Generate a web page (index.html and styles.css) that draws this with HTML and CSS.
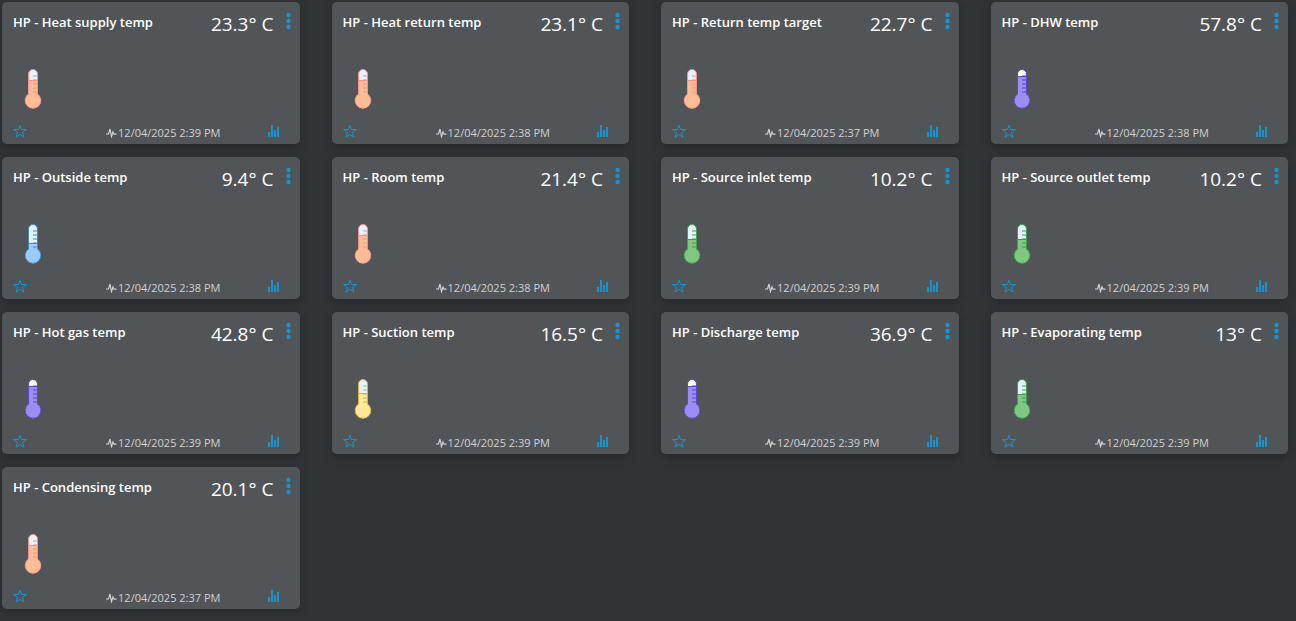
FILE: index.html
```
<!DOCTYPE html>
<html lang="en">
<head>
    <meta charset="UTF-8">
    <meta name="viewport" content="width=device-width, initial-scale=1.0">
    <title>Heat pump temperatures</title>
    <link rel="stylesheet" href="styles.css">
</head>
<body>
    <svg class="sprite" aria-hidden="true">
        <clipPath id="glass">
            <path d="M5.5 6a4.5 4.5 0 0 1 9 0v20.1a7.8 7.8 0 1 1-9 0z"/>
        </clipPath>
        <symbol id="thermo" viewBox="0 0 20 42">
            <g clip-path="url(#glass)">
                <rect class="glass" width="20" height="42"/>
                <rect class="fluid" width="20" height="42"/>
                <rect class="level" width="20" height="1"/>
            </g>
            <path class="outline" d="M5.5 6a4.5 4.5 0 0 1 9 0v20.1a7.8 7.8 0 1 1-9 0z"/>
            <path class="outline" d="M10 8h4.500M10 12h4.500M10 16h4.500M10 20h4.500M10 24h4.500"/>
        </symbol>
        <symbol id="star" viewBox="0 0 14 14">
            <path d="M7 1.200l1.500 4.300h5l-4 3 1.500 4.700L7 10.400l-4 2.800 1.500-4.700-4-3h5z" fill="none" stroke="currentColor"/>
        </symbol>
        <symbol id="dots" viewBox="0 0 5 18">
            <circle cx="2.500" cy="3" r="2.200"/>
            <circle cx="2.500" cy="9" r="2.200"/>
            <circle cx="2.500" cy="15" r="2.200"/>
        </symbol>
        <symbol id="chart" viewBox="0 0 12 12">
            <path d="M0 7h2v5H0zM3 0h2v12H3zM6 5h2v7H6zM9 2h2v10H9z"/>
        </symbol>
        <symbol id="pulse" viewBox="0 0 11 10">
            <path d="M0 6h2.500L4 1l1.500 7.500L7 4l1 2.200h2.500" fill="none" stroke="currentColor" stroke-width="1.200"/>
        </symbol>
    </svg>

    <main class="devices">
        <article class="card">
            <header class="card-head">
                <h2>HP - Heat supply temp</h2>
                <span class="value">23.3° C</span>
                <button type="button" class="menu" aria-label="Menu"><svg><use href="#dots"/></svg></button>
            </header>
            <svg class="thermo warm"><use href="#thermo"/></svg>
            <footer class="card-foot">
                <button type="button" class="fav" aria-label="Favorite"><svg><use href="#star"/></svg></button>
                <span class="updated"><svg><use href="#pulse"/></svg><time>12/04/2025 2:39 PM</time></span>
                <button type="button" class="chart" aria-label="History"><svg><use href="#chart"/></svg></button>
            </footer>
        </article>
        <article class="card">
            <header class="card-head">
                <h2>HP - Heat return temp</h2>
                <span class="value">23.1° C</span>
                <button type="button" class="menu" aria-label="Menu"><svg><use href="#dots"/></svg></button>
            </header>
            <svg class="thermo warm"><use href="#thermo"/></svg>
            <footer class="card-foot">
                <button type="button" class="fav" aria-label="Favorite"><svg><use href="#star"/></svg></button>
                <span class="updated"><svg><use href="#pulse"/></svg><time>12/04/2025 2:38 PM</time></span>
                <button type="button" class="chart" aria-label="History"><svg><use href="#chart"/></svg></button>
            </footer>
        </article>
        <article class="card">
            <header class="card-head">
                <h2>HP - Return temp target</h2>
                <span class="value">22.7° C</span>
                <button type="button" class="menu" aria-label="Menu"><svg><use href="#dots"/></svg></button>
            </header>
            <svg class="thermo warm"><use href="#thermo"/></svg>
            <footer class="card-foot">
                <button type="button" class="fav" aria-label="Favorite"><svg><use href="#star"/></svg></button>
                <span class="updated"><svg><use href="#pulse"/></svg><time>12/04/2025 2:37 PM</time></span>
                <button type="button" class="chart" aria-label="History"><svg><use href="#chart"/></svg></button>
            </footer>
        </article>
        <article class="card">
            <header class="card-head">
                <h2>HP - DHW temp</h2>
                <span class="value">57.8° C</span>
                <button type="button" class="menu" aria-label="Menu"><svg><use href="#dots"/></svg></button>
            </header>
            <svg class="thermo hot"><use href="#thermo"/></svg>
            <footer class="card-foot">
                <button type="button" class="fav" aria-label="Favorite"><svg><use href="#star"/></svg></button>
                <span class="updated"><svg><use href="#pulse"/></svg><time>12/04/2025 2:38 PM</time></span>
                <button type="button" class="chart" aria-label="History"><svg><use href="#chart"/></svg></button>
            </footer>
        </article>
        <article class="card">
            <header class="card-head">
                <h2>HP - Outside temp</h2>
                <span class="value">9.4° C</span>
                <button type="button" class="menu" aria-label="Menu"><svg><use href="#dots"/></svg></button>
            </header>
            <svg class="thermo cold"><use href="#thermo"/></svg>
            <footer class="card-foot">
                <button type="button" class="fav" aria-label="Favorite"><svg><use href="#star"/></svg></button>
                <span class="updated"><svg><use href="#pulse"/></svg><time>12/04/2025 2:38 PM</time></span>
                <button type="button" class="chart" aria-label="History"><svg><use href="#chart"/></svg></button>
            </footer>
        </article>
        <article class="card">
            <header class="card-head">
                <h2>HP - Room temp</h2>
                <span class="value">21.4° C</span>
                <button type="button" class="menu" aria-label="Menu"><svg><use href="#dots"/></svg></button>
            </header>
            <svg class="thermo warm"><use href="#thermo"/></svg>
            <footer class="card-foot">
                <button type="button" class="fav" aria-label="Favorite"><svg><use href="#star"/></svg></button>
                <span class="updated"><svg><use href="#pulse"/></svg><time>12/04/2025 2:38 PM</time></span>
                <button type="button" class="chart" aria-label="History"><svg><use href="#chart"/></svg></button>
            </footer>
        </article>
        <article class="card">
            <header class="card-head">
                <h2>HP - Source inlet temp</h2>
                <span class="value">10.2° C</span>
                <button type="button" class="menu" aria-label="Menu"><svg><use href="#dots"/></svg></button>
            </header>
            <svg class="thermo cool"><use href="#thermo"/></svg>
            <footer class="card-foot">
                <button type="button" class="fav" aria-label="Favorite"><svg><use href="#star"/></svg></button>
                <span class="updated"><svg><use href="#pulse"/></svg><time>12/04/2025 2:39 PM</time></span>
                <button type="button" class="chart" aria-label="History"><svg><use href="#chart"/></svg></button>
            </footer>
        </article>
        <article class="card">
            <header class="card-head">
                <h2>HP - Source outlet temp</h2>
                <span class="value">10.2° C</span>
                <button type="button" class="menu" aria-label="Menu"><svg><use href="#dots"/></svg></button>
            </header>
            <svg class="thermo cool"><use href="#thermo"/></svg>
            <footer class="card-foot">
                <button type="button" class="fav" aria-label="Favorite"><svg><use href="#star"/></svg></button>
                <span class="updated"><svg><use href="#pulse"/></svg><time>12/04/2025 2:39 PM</time></span>
                <button type="button" class="chart" aria-label="History"><svg><use href="#chart"/></svg></button>
            </footer>
        </article>
        <article class="card">
            <header class="card-head">
                <h2>HP - Hot gas temp</h2>
                <span class="value">42.8° C</span>
                <button type="button" class="menu" aria-label="Menu"><svg><use href="#dots"/></svg></button>
            </header>
            <svg class="thermo hot"><use href="#thermo"/></svg>
            <footer class="card-foot">
                <button type="button" class="fav" aria-label="Favorite"><svg><use href="#star"/></svg></button>
                <span class="updated"><svg><use href="#pulse"/></svg><time>12/04/2025 2:39 PM</time></span>
                <button type="button" class="chart" aria-label="History"><svg><use href="#chart"/></svg></button>
            </footer>
        </article>
        <article class="card">
            <header class="card-head">
                <h2>HP - Suction temp</h2>
                <span class="value">16.5° C</span>
                <button type="button" class="menu" aria-label="Menu"><svg><use href="#dots"/></svg></button>
            </header>
            <svg class="thermo mild"><use href="#thermo"/></svg>
            <footer class="card-foot">
                <button type="button" class="fav" aria-label="Favorite"><svg><use href="#star"/></svg></button>
                <span class="updated"><svg><use href="#pulse"/></svg><time>12/04/2025 2:39 PM</time></span>
                <button type="button" class="chart" aria-label="History"><svg><use href="#chart"/></svg></button>
            </footer>
        </article>
        <article class="card">
            <header class="card-head">
                <h2>HP - Discharge temp</h2>
                <span class="value">36.9° C</span>
                <button type="button" class="menu" aria-label="Menu"><svg><use href="#dots"/></svg></button>
            </header>
            <svg class="thermo hot"><use href="#thermo"/></svg>
            <footer class="card-foot">
                <button type="button" class="fav" aria-label="Favorite"><svg><use href="#star"/></svg></button>
                <span class="updated"><svg><use href="#pulse"/></svg><time>12/04/2025 2:39 PM</time></span>
                <button type="button" class="chart" aria-label="History"><svg><use href="#chart"/></svg></button>
            </footer>
        </article>
        <article class="card">
            <header class="card-head">
                <h2>HP - Evaporating temp</h2>
                <span class="value">13° C</span>
                <button type="button" class="menu" aria-label="Menu"><svg><use href="#dots"/></svg></button>
            </header>
            <svg class="thermo cool"><use href="#thermo"/></svg>
            <footer class="card-foot">
                <button type="button" class="fav" aria-label="Favorite"><svg><use href="#star"/></svg></button>
                <span class="updated"><svg><use href="#pulse"/></svg><time>12/04/2025 2:39 PM</time></span>
                <button type="button" class="chart" aria-label="History"><svg><use href="#chart"/></svg></button>
            </footer>
        </article>
        <article class="card">
            <header class="card-head">
                <h2>HP - Condensing temp</h2>
                <span class="value">20.1° C</span>
                <button type="button" class="menu" aria-label="Menu"><svg><use href="#dots"/></svg></button>
            </header>
            <svg class="thermo warm"><use href="#thermo"/></svg>
            <footer class="card-foot">
                <button type="button" class="fav" aria-label="Favorite"><svg><use href="#star"/></svg></button>
                <span class="updated"><svg><use href="#pulse"/></svg><time>12/04/2025 2:37 PM</time></span>
                <button type="button" class="chart" aria-label="History"><svg><use href="#chart"/></svg></button>
            </footer>
        </article>
    </main>
</body>
</html>
```

FILE: styles.css
```
body {
    margin: 0;
    background-color: #313437;
    color: #ffffff;
    font-family: "Open Sans", sans-serif;
}
.sprite {
    position: absolute;
    width: 0;
    height: 0;
}
.devices {
    display: grid;
    grid-template-columns: repeat(4, 1fr);
    gap: 13px 32px;
    padding: 2px 8px 12px 2px;
}
.card {
    display: flex;
    flex-direction: column;
    padding: 10px 9px 3px 11px;
    background-color: #525558;
    border-radius: 5px;
    box-shadow: 0 3px 10px rgba(0, 0, 0, 0.25);
}
.card-head {
    display: flex;
    align-items: flex-start;
    height: 56px;
}
.card-head h2 {
    flex: 1;
    margin: 0;
    font-size: 13px;
    font-weight: 600;
    line-height: 20px;
}
.value {
    font-size: 19px;
    line-height: 24px;
}
button {
    display: flex;
    padding: 0;
    border: none;
    background: none;
    color: #1594d2;
    cursor: pointer;
}
button svg {
    fill: currentColor;
}
.menu {
    margin-left: 12px;
}
.menu svg {
    width: 5px;
    height: 18px;
}
.thermo {
    width: 20px;
    height: 42px;
    margin-left: 10px;
}
.card-foot {
    display: flex;
    align-items: center;
    margin-top: 11px;
    height: 20px;
}
.fav svg {
    width: 14px;
    height: 14px;
}
.chart {
    margin-right: 11px;
}
.chart svg {
    width: 12px;
    height: 12px;
}
.updated {
    flex: 1;
    display: flex;
    align-items: center;
    justify-content: center;
    gap: 1px;
    padding: 4px 0 0 32px;
    color: #d0d0d0;
    font-size: 11px;
    line-height: 20px;
}
.updated svg {
    width: 11px;
    height: 10px;
}

/* thermometer */
.glass {
    fill: var(--glass, #e3f2ff);
}
.fluid {
    fill: var(--fluid);
    y: var(--level);
}
.level {
    fill: var(--line);
    y: var(--level);
}
.outline {
    fill: none;
    stroke: var(--line);
}
.warm {
    --fluid: #ffbd95;
    --line: #f98f8b;
    --level: 12px;
}
.hot {
    --glass: #f0ffe6;
    --fluid: #9a8df5;
    --line: #5b47cc;
    --level: 8px;
}
.cold {
    --fluid: #98ccfd;
    --line: #4788c7;
    --level: 20px;
}
.cool {
    --fluid: #81c784;
    --line: #3fa046;
    --level: 16px;
}
.mild {
    --fluid: #ffe79c;
    --line: #dbb13b;
    --level: 15px;
}
```
